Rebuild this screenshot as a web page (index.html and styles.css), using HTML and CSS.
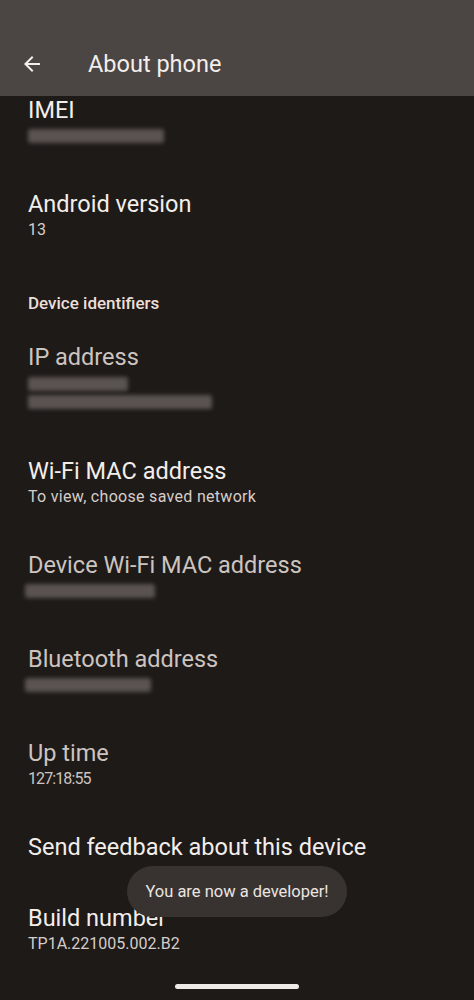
FILE: index.html
```html
<!DOCTYPE html>
<html lang="en">
<head>
<meta charset="utf-8">
<title>About phone</title>
<link rel="stylesheet" href="styles.css">
</head>
<body>
<div class="screen">
  <header class="appbar">
    <button class="back" aria-label="Back">
      <svg width="24" height="24" viewBox="0 0 24 24"><path d="M20 11H7.83l5.59-5.59L12 4l-8 8 8 8 1.41-1.41L7.83 13H20v-2z" fill="#f4efec"/></svg>
    </button>
    <h1 class="appbar-title">About phone</h1>
  </header>

  <main class="list">
    <div class="item clipped">
      <div class="title">IMEI</div>
      <div class="summary"><span class="blur b-imei"></span></div>
    </div>
    <div class="item">
      <div class="title">Android version</div>
      <div class="summary">13</div>
    </div>
    <div class="category">Device identifiers</div>
    <div class="item disabled">
      <div class="title">IP address</div>
      <div class="summary two">
        <span class="blur b-ip1"></span>
        <span class="blur b-ip2"></span>
      </div>
    </div>
    <div class="item">
      <div class="title">Wi-Fi MAC address</div>
      <div class="summary text">To view, choose saved network</div>
    </div>
    <div class="item disabled">
      <div class="title">Device Wi-Fi MAC address</div>
      <div class="summary"><span class="blur b-dev"></span></div>
    </div>
    <div class="item disabled">
      <div class="title">Bluetooth address</div>
      <div class="summary"><span class="blur b-bt"></span></div>
    </div>
    <div class="item disabled">
      <div class="title">Up time</div>
      <div class="summary num">127:18:55</div>
    </div>
    <div class="item single">
      <div class="title">Send feedback about this device</div>
    </div>
    <div class="item">
      <div class="title">Build number</div>
      <div class="summary">TP1A.221005.002.B2</div>
    </div>
  </main>

  <div class="toast">You are now a developer!</div>
  <div class="home-indicator"></div>
</div>
</body>
</html>
```
FILE: styles.css
```css
* { box-sizing: border-box; }
html, body {
  margin: 0;
  padding: 0;
  background: #1e1a18;
}
.screen {
  position: relative;
  width: 474px;
  height: 1000px;
  overflow: hidden;
  background: #1e1a18;
  font-family: Roboto, "Open Sans", sans-serif;
  color: #f4eeeb;
}
.appbar {
  height: 96px;
  background: #4b4543;
  display: flex;
  align-items: flex-end;
  padding: 0 0 18px 20px;
}
.back {
  width: 24px;
  height: 24px;
  padding: 0;
  border: 0;
  background: none;
  display: flex;
  margin-bottom: 2px;
}
.appbar-title {
  margin: 0 0 0 44px;
  font-size: 23.5px;
  font-weight: 400;
  line-height: 28px;
  color: #f4eeeb;
}
.list {
  display: flex;
  flex-direction: column;
}
.item {
  padding: 23px 28px 21px;
}
.item.clipped { padding-top: 0; }
.item.single { padding-bottom: 20px; }
.title {
  font-size: 23.5px;
  line-height: 28px;
  color: #f4eeeb;
}
.summary {
  margin-top: 2px;
  font-size: 16px;
  line-height: 20px;
  color: #d6cdc9;
  height: 20px;
  display: flex;
  flex-direction: column;
  justify-content: center;
}
.summary.text { letter-spacing: 0.3px; }
.summary.num { letter-spacing: -0.9px; }
.summary.two { height: 40px; }
.disabled .title { color: #cdc4c0; }
.disabled .summary { color: #cdc4c0; }
.category {
  padding: 32px 28px 7px;
  font-size: 17px;
  line-height: 20px;
  font-weight: 500;
  color: #ecdfd9;
}
.blur {
  display: block;
  height: 14px;
  background: #5a5351;
  filter: blur(2px);
  border-radius: 2px;
}
.b-imei { width: 136px; }
.b-ip1 { width: 100px; margin-bottom: 4px; }
.b-ip2 { width: 184px; }
.b-dev { width: 130px; margin-left: -3px; }
.b-bt { width: 126px; margin-left: -3px; }
.toast {
  position: absolute;
  left: 127px;
  top: 866px;
  width: 220px;
  height: 51px;
  border-radius: 26px;
  background: #383331;
  color: #ebe5e2;
  font-size: 16.5px;
  display: flex;
  align-items: center;
  justify-content: center;
}
.home-indicator {
  position: absolute;
  left: 175px;
  top: 984px;
  width: 124px;
  height: 5px;
  border-radius: 3px;
  background: #eeeae8;
}
```
